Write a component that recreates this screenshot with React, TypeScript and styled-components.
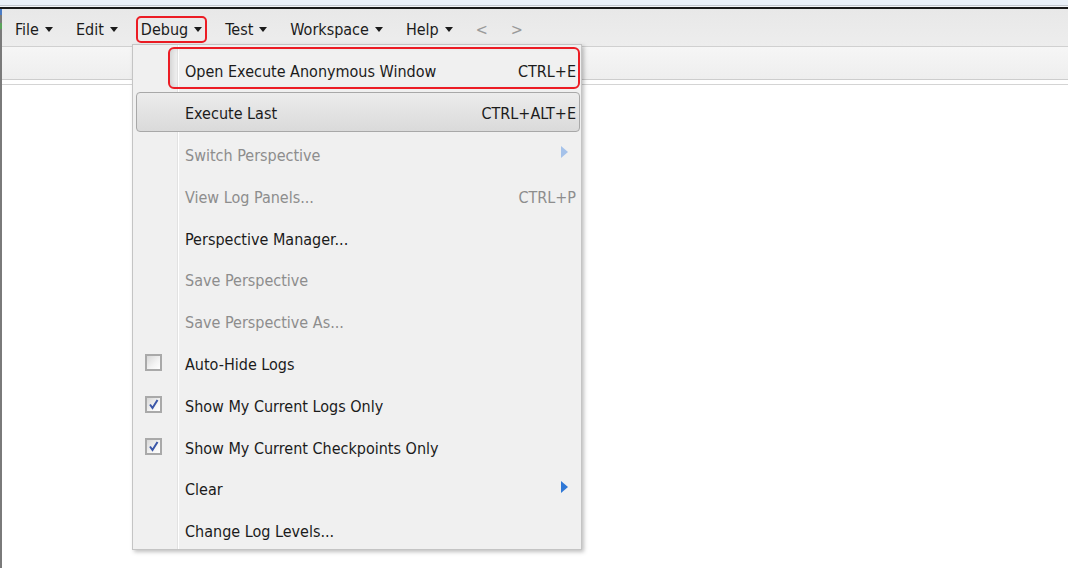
import React from 'react';
import styled, { createGlobalStyle, css } from 'styled-components';

const GlobalStyle = createGlobalStyle`
  html, body {
    margin: 0;
    padding: 0;
    background: #ffffff;
  }
  body {
    font-family: "DejaVu Sans Condensed", "DejaVu Sans", sans-serif;
    color: #1b1b1b;
  }
`;

// Window chrome
const Page = styled.div`
  position: relative;
  width: 1068px;
  height: 568px;
  overflow: hidden;
  background: #ffffff;
`;

const TopStrip = styled.div`
  height: 5px;
  background: #eaf0f8;
  border-bottom: 1px solid #c3c8d0;
`;

const TopGap = styled.div`
  height: 1px;
  background: #f4f6f9;
  border-bottom: 2px solid #1a1a1a;
`;

const Body = styled.div`
  display: flex;
  height: 559px;
`;

const LeftEdge = styled.div`
  width: 2px;
  background: linear-gradient(180deg, #4a7bc4 0 6px, #7a7a7a 6px 14px, #5aa35a 14px 20px, #7a7a7a 20px);
`;

const Workspace = styled.div`
  flex: 1;
  display: flex;
  flex-direction: column;
`;

const MenuBar = styled.div`
  height: 37px;
  box-sizing: border-box;
  padding: 3px 0 0 8px;
  display: flex;
  align-items: center;
  background: linear-gradient(180deg, #e8e8e8 0%, #ededed 100%);
`;

const BarItem = styled.div<{ $marked?: boolean; $dim?: boolean }>`
  position: relative;
  display: flex;
  align-items: center;
  gap: 6px;
  height: 27px;
  padding: 0 3px;
  margin-right: 13px;
  font-size: 16px;
  color: ${({ $dim }) => ($dim ? '#9a9a9a' : '#1b1b1b')};
  box-sizing: border-box;
  border: 2px solid ${({ $marked }) => ($marked ? '#ec1c24' : 'transparent')};
  border-radius: 5px;
`;

const Caret = styled.span`
  width: 0;
  height: 0;
  border-left: 4px solid transparent;
  border-right: 4px solid transparent;
  border-top: 5px solid #1b1b1b;
  margin-top: 1px;
`;

const ToolBar = styled.div`
  height: 32px;
  background: linear-gradient(180deg, #f6f6f6 0%, #eeeeee 100%);
  border-top: 1px solid #d0d0d0;
  border-bottom: 1px solid #cdcdcd;
`;

const ToolGap = styled.div`
  height: 4px;
  background: #ffffff;
  border-bottom: 1px solid #d4d4d4;
`;

const Editor = styled.div`
  flex: 1;
  background: #ffffff;
`;

// Dropdown
const Dropdown = styled.div`
  position: absolute;
  left: 132px;
  top: 44px;
  width: 450px;
  height: 506px;
  box-sizing: border-box;
  padding-top: 6px;
  background: linear-gradient(90deg, #f0f0f0 0 44px, #e2e2e2 44px 45px, #ffffff 45px 46px, #f0f0f0 46px);
  border: 1px solid #c4c4c4;
  box-shadow: 2px 2px 4px rgba(0, 0, 0, 0.25);
`;

const Item = styled.div<{ $hover?: boolean; $disabled?: boolean; $marked?: boolean }>`
  position: relative;
  display: flex;
  align-items: center;
  height: 41.8px;
  box-sizing: border-box;
  padding: 0 5px 0 0;
  font-size: 16px;
  color: ${({ $disabled }) => ($disabled ? '#8d8d8d' : '#1b1b1b')};

  ${({ $hover }) =>
    $hover &&
    css`
      &::before {
        content: '';
        position: absolute;
        left: 3px;
        right: 1px;
        top: -1px;
        bottom: 3px;
        border: 1px solid #a8a8a8;
        border-radius: 4px;
        background: linear-gradient(180deg, #ececec 0%, #dadada 100%);
      }
    `}

  ${({ $marked }) =>
    $marked &&
    css`
      &::after {
        content: '';
        position: absolute;
        left: 35px;
        right: 1px;
        top: -4px;
        bottom: 4px;
        border: 2px solid #ec1c24;
        border-radius: 6px;
        box-shadow: inset 6px 0 6px -4px rgba(0, 0, 0, 0.15);
      }
    `}
`;

const IconCell = styled.div`
  position: relative;
  width: 52px;
  display: flex;
  align-items: center;
  padding-left: 12px;
  box-sizing: border-box;
`;

const Label = styled.span`
  position: relative;
  flex: 1;
  white-space: nowrap;
`;

const Shortcut = styled.span`
  position: relative;
  white-space: nowrap;
`;

const SubArrow = styled.span<{ $disabled?: boolean }>`
  position: relative;
  width: 0;
  height: 0;
  margin-right: 8px;
  margin-top: -6px;
  border-top: 6px solid transparent;
  border-bottom: 6px solid transparent;
  border-left: 7px solid ${({ $disabled }) => ($disabled ? '#a5c2ea' : '#2f78d6')};
`;

const Box = styled.span`
  width: 17px;
  height: 17px;
  box-sizing: border-box;
  border: 2px solid #a9a9a9;
  background: linear-gradient(135deg, #d8d8d8 0%, #f4f4f4 60%, #ffffff 100%);
  display: flex;
  align-items: center;
  justify-content: center;
  margin-top: -4px;
`;

type Entry = {
  label: string;
  shortcut?: string;
  disabled?: boolean;
  hover?: boolean;
  marked?: boolean;
  submenu?: boolean;
  check?: 'on' | 'off';
};

const entries: Entry[] = [
  { label: 'Open Execute Anonymous Window', shortcut: 'CTRL+E', marked: true },
  { label: 'Execute Last', shortcut: 'CTRL+ALT+E', hover: true },
  { label: 'Switch Perspective', disabled: true, submenu: true },
  { label: 'View Log Panels...', shortcut: 'CTRL+P', disabled: true },
  { label: 'Perspective Manager...' },
  { label: 'Save Perspective', disabled: true },
  { label: 'Save Perspective As...', disabled: true },
  { label: 'Auto-Hide Logs', check: 'off' },
  { label: 'Show My Current Logs Only', check: 'on' },
  { label: 'Show My Current Checkpoints Only', check: 'on' },
  { label: 'Clear', submenu: true },
  { label: 'Change Log Levels...' },
];

const menus = ['File', 'Edit', 'Debug', 'Test', 'Workspace', 'Help'];

const CheckBox = ({ on }: { on: boolean }) => (
  <Box>
    {on && (
      <svg width="11" height="11" viewBox="0 0 11 11">
        <path d="M2 5.5 L4.5 9 L9.5 1" fill="none" stroke="#3a56a8" strokeWidth="2" />
      </svg>
    )}
  </Box>
);

const App = () => {
  return (
    <Page>
      <GlobalStyle />
      <TopStrip />
      <TopGap />
      <Body>
        <LeftEdge />
        <Workspace>
          <MenuBar>
            {menus.map((m) => (
              <BarItem key={m} $marked={m === 'Debug'}>
                {m}
                <Caret />
              </BarItem>
            ))}
            <BarItem $dim>&lt;</BarItem>
            <BarItem $dim>&gt;</BarItem>
          </MenuBar>
          <ToolBar />
          <ToolGap />
          <Editor />
        </Workspace>
      </Body>

      <Dropdown>
        {entries.map((e) => (
          <Item key={e.label} $hover={e.hover} $disabled={e.disabled} $marked={e.marked}>
            <IconCell>{e.check && <CheckBox on={e.check === 'on'} />}</IconCell>
            <Label>{e.label}</Label>
            {e.shortcut && <Shortcut>{e.shortcut}</Shortcut>}
            {e.submenu && <SubArrow $disabled={e.disabled} />}
          </Item>
        ))}
      </Dropdown>
    </Page>
  );
};

export default App;
